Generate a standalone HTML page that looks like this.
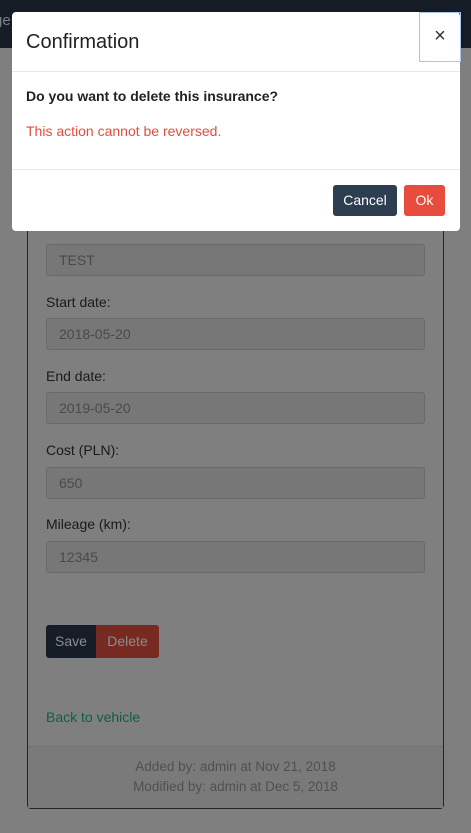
<!DOCTYPE html>
<html><head><style>
body{margin:0;width:471px;height:833px;background:#7f7f7f;font-family:"Liberation Sans",sans-serif;position:relative;overflow:hidden}
.nav{position:absolute;left:0;top:0;width:471px;height:48px;background:#161c26}
.nav span{position:absolute;left:-6px;top:12px;color:#7c7f84;font-size:15px}
.card{position:absolute;left:27px;top:200px;width:415px;height:607px;border:1px solid #1e242c;border-radius:4px}
.foot{position:absolute;left:0;right:0;top:545px;bottom:0;border-top:1px solid #737373;background:#7a7a7a;text-align:center;color:#505050;font-size:13.5px;line-height:20px;padding-top:10px}
label{position:absolute;left:18px;color:#1a1a1a;font-size:14px}
.in{position:absolute;left:18px;width:365px;height:30px;border:1px solid #6a6a6a;border-radius:3px;background:#777;color:#4a4a4a;font-size:14px;line-height:30px;padding-left:12px;box-sizing:content-box}
.btn{position:absolute;top:424px;height:33px;line-height:33px;font-size:14px;color:#8c8c8c}
a{position:absolute;left:18px;top:508px;color:#0f5e48;font-size:14px}
.modal{position:absolute;left:12px;top:12px;width:448px;height:219px;background:#fff;border-radius:4px}
.modal h1{position:absolute;left:14px;top:19px;margin:0;font-weight:normal;font-size:20px;color:#222}
.x{position:absolute;left:407px;top:0;width:40px;height:48px;border:1px solid #aac4f0;font-size:20px;text-align:center;line-height:46px;color:#333}
.hr{position:absolute;left:0;right:0;height:1px;background:#e8e8e8}
.mb{position:absolute;height:31px;line-height:31px;border-radius:3px;color:#fff;font-size:14px;text-align:center;top:173px}
</style></head><body>
<div class="nav"><span>ge</span></div>
<div class="card">
<div class="in" style="top:43px">TEST</div>
<label style="top:93px">Start date:</label>
<div class="in" style="top:117px">2018-05-20</div>
<label style="top:167px">End date:</label>
<div class="in" style="top:191px">2019-05-20</div>
<label style="top:241px">Cost (PLN):</label>
<div class="in" style="top:266px">650</div>
<label style="top:315px">Mileage (km):</label>
<div class="in" style="top:340px">12345</div>
<div class="btn" style="left:18px;width:50px;background:#171d27;border-radius:3px 0 0 3px;color:#8a8d92;text-align:center">Save</div>
<div class="btn" style="left:68px;width:63px;background:#772a22;border-radius:0 3px 3px 0;text-align:center">Delete</div>
<a>Back to vehicle</a>
<div class="foot">Added by: admin at Nov 21, 2018<br>Modified by: admin at Dec 5, 2018</div>
</div>
<div class="modal">
<h1>Confirmation</h1>
<div class="x">×</div>
<div class="hr" style="top:59px"></div>
<div style="position:absolute;left:14px;top:76px;font-size:14px;font-weight:bold;color:#222">Do you want to delete this insurance?</div>
<div style="position:absolute;left:14px;top:111px;font-size:14px;color:#e74c3c">This action cannot be reversed.</div>
<div class="hr" style="top:157px"></div>
<div class="mb" style="left:321px;width:64px;background:#2c3e50">Cancel</div>
<div class="mb" style="left:392px;width:41px;background:#e74c3c">Ok</div>
</div>
</body></html>
